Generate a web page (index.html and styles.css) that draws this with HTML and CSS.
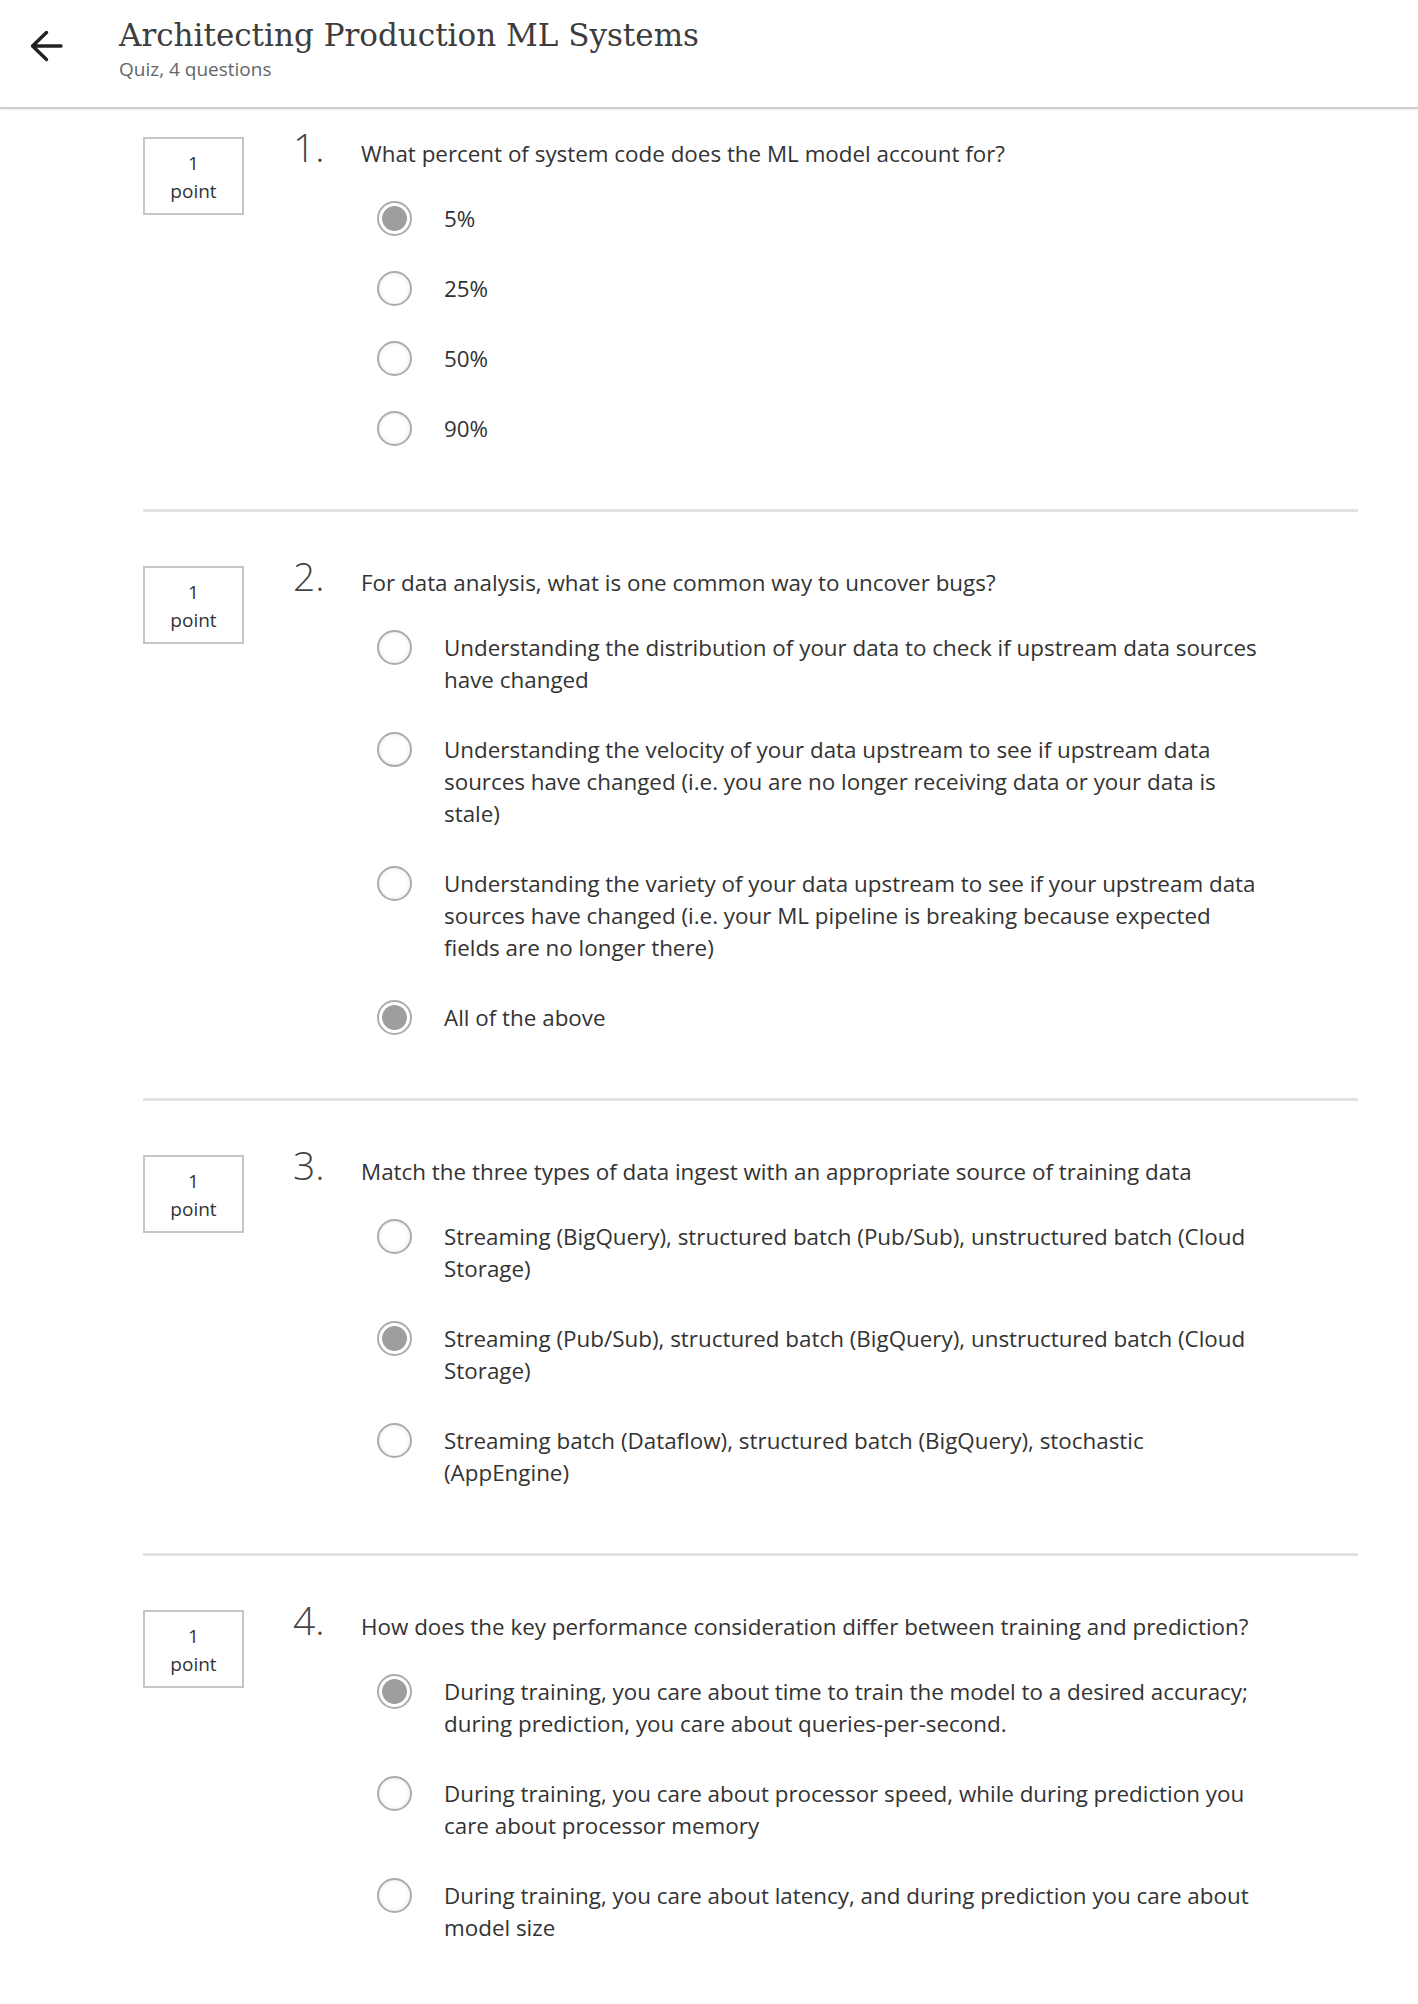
FILE: index.html
```html
<!DOCTYPE html>
<html lang="en">
<head>
<meta charset="utf-8">
<title>Architecting Production ML Systems</title>
<link rel="stylesheet" href="styles.css">
</head>
<body>
<header class="top">
  <a class="back" href="#" aria-label="Back">
    <svg width="34" height="32" viewBox="0 0 34 32"><path d="M32 16H3.5M17.5 2.5L3.5 16l14 13.5" fill="none" stroke="#222" stroke-width="3.4" stroke-linecap="round" stroke-linejoin="round"/></svg>
  </a>
  <div class="titles">
    <h1 class="title">Architecting Production ML Systems</h1>
    <div class="subtitle">Quiz, 4 questions</div>
  </div>
</header>

<main class="quiz">
  <section class="question first">
    <div class="points"><span>1</span><span>point</span></div>
    <div class="qmain">
      <div class="qhead"><span class="qnum">1.</span><span class="qtext">What percent of system code does the ML model account for?</span></div>
      <div class="options">
        <div class="option"><span class="radio checked"></span><span class="label">5%</span></div>
        <div class="option"><span class="radio"></span><span class="label">25%</span></div>
        <div class="option"><span class="radio"></span><span class="label">50%</span></div>
        <div class="option"><span class="radio"></span><span class="label">90%</span></div>
      </div>
    </div>
  </section>

  <section class="question">
    <div class="points"><span>1</span><span>point</span></div>
    <div class="qmain">
      <div class="qhead"><span class="qnum">2.</span><span class="qtext">For data analysis, what is one common way to uncover bugs?</span></div>
      <div class="options">
        <div class="option"><span class="radio"></span><span class="label">Understanding the distribution of your data to check if upstream data sources have changed</span></div>
        <div class="option"><span class="radio"></span><span class="label">Understanding the velocity of your data upstream to see if upstream data sources have changed (i.e. you are no longer receiving data or your data is stale)</span></div>
        <div class="option"><span class="radio"></span><span class="label">Understanding the variety of your data upstream to see if your upstream data sources have changed (i.e. your ML pipeline is breaking because expected fields are no longer there)</span></div>
        <div class="option"><span class="radio checked"></span><span class="label">All of the above</span></div>
      </div>
    </div>
  </section>

  <section class="question">
    <div class="points"><span>1</span><span>point</span></div>
    <div class="qmain">
      <div class="qhead"><span class="qnum">3.</span><span class="qtext">Match the three types of data ingest with an appropriate source of training data</span></div>
      <div class="options">
        <div class="option"><span class="radio"></span><span class="label">Streaming (BigQuery), structured batch (Pub/Sub), unstructured batch (Cloud Storage)</span></div>
        <div class="option"><span class="radio checked"></span><span class="label">Streaming (Pub/Sub), structured batch (BigQuery), unstructured batch (Cloud Storage)</span></div>
        <div class="option"><span class="radio"></span><span class="label">Streaming batch (Dataflow), structured batch (BigQuery), stochastic (AppEngine)</span></div>
      </div>
    </div>
  </section>

  <section class="question last">
    <div class="points"><span>1</span><span>point</span></div>
    <div class="qmain">
      <div class="qhead"><span class="qnum">4.</span><span class="qtext">How does the key performance consideration differ between training and prediction?</span></div>
      <div class="options">
        <div class="option"><span class="radio checked"></span><span class="label">During training, you care about time to train the model to a desired accuracy; during prediction, you care about queries-per-second.</span></div>
        <div class="option"><span class="radio"></span><span class="label">During training, you care about processor speed, while during prediction you care about processor memory</span></div>
        <div class="option"><span class="radio"></span><span class="label">During training, you care about latency, and during prediction you care about model size</span></div>
      </div>
    </div>
  </section>
</main>
</body>
</html>
```

FILE: styles.css
```css
* { box-sizing: border-box; }

html, body {
  margin: 0;
  padding: 0;
  background: #ffffff;
}

body {
  font-family: "Open Sans", "Noto Sans", sans-serif;
  color: #333333;
}

.top {
  display: flex;
  align-items: flex-start;
  height: 109px;
  padding: 15px 0 0 29px;
  border-bottom: 2px solid #cfcfcf;
  box-shadow: 0 1px 2px rgba(0, 0, 0, 0.08);
}

.back {
  display: block;
  width: 34px;
  height: 32px;
  margin-top: 15px;
  margin-right: 56px;
}

.back svg { display: block; }

.titles { display: flex; flex-direction: column; }

.title {
  margin: 0;
  font-family: "DejaVu Serif", "Liberation Serif", serif;
  font-weight: 400;
  font-size: 31px;
  line-height: 40px;
  color: #3d3d3d;
}

.subtitle {
  margin-top: 2px;
  font-size: 19px;
  line-height: 24px;
  color: #666666;
}

.quiz {
  width: 1215px;
  margin-left: 143px;
}

.question {
  display: flex;
  align-items: flex-start;
  padding: 54px 0 64px;
  border-bottom: 3px solid #e2e2e2;
}

.question.first { padding-top: 28px; }
.question.last { border-bottom: none; }

.points {
  display: flex;
  flex-direction: column;
  align-items: center;
  width: 101px;
  height: 78px;
  padding-top: 10px;
  border: 2px solid #c6c6c6;
  font-size: 19px;
  line-height: 28px;
  color: #333333;
  flex: none;
}

.qmain {
  margin-left: 53px;
  flex: 1;
}

.qhead {
  display: flex;
  align-items: baseline;
}

.qnum {
  width: 68px;
  margin-left: -4px;
  flex: none;
  font-size: 39px;
  font-weight: 300;
  line-height: 20px;
  color: #444444;
}

.qtext {
  font-size: 22.4px;
  line-height: 32px;
}

.options {
  display: flex;
  flex-direction: column;
  gap: 38px;
  margin-top: 33px;
  padding-left: 80px;
}

.option {
  display: flex;
  align-items: flex-start;
}

.radio {
  flex: none;
  width: 35px;
  height: 35px;
  margin: -2px 32px -2px 0;
  border-radius: 50%;
  border: 2.5px solid #acacac;
  background: #ffffff;
  box-shadow: inset 0 0 4px rgba(0, 0, 0, 0.10);
}

.radio.checked {
  box-shadow: none;
  background: radial-gradient(circle, #9e9e9e 0, #9e9e9e 12px, #ffffff 12.8px);
}

.label {
  flex: 0 1 820px;
  font-size: 22.4px;
  line-height: 32px;
  color: #333333;
}
```
